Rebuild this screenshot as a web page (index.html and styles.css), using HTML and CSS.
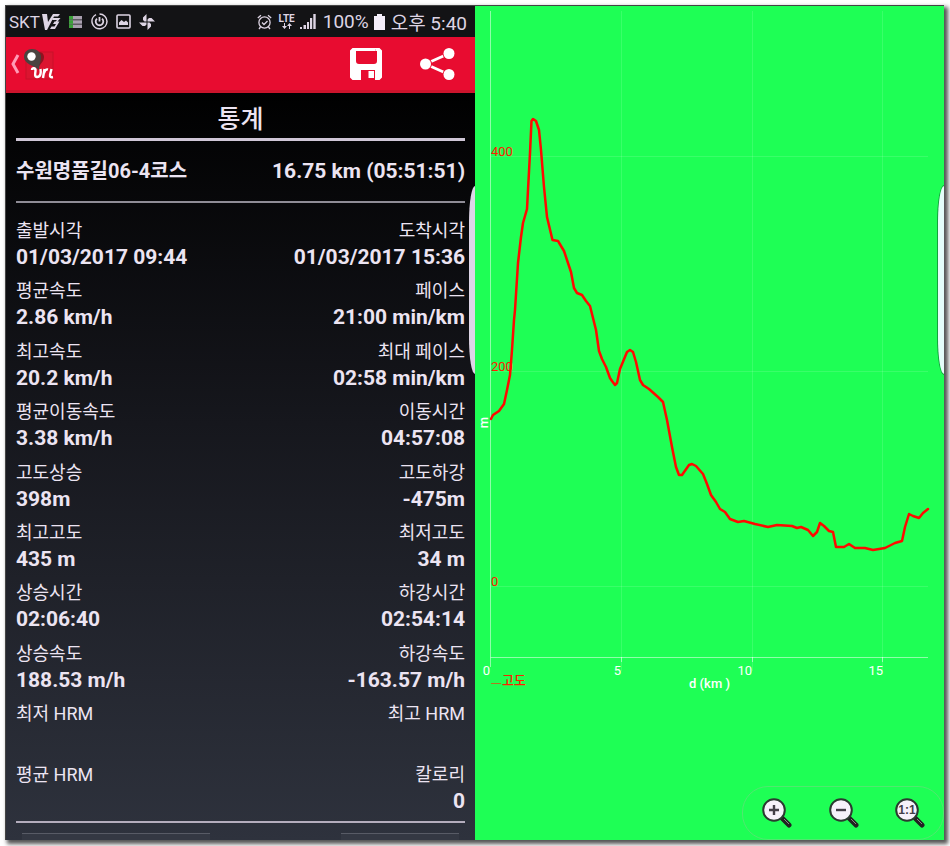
FILE: index.html
```
<!DOCTYPE html>
<html lang="ko">
<head>
  <meta charset="UTF-8" />
  <meta name="viewport" content="width=device-width, initial-scale=1.0"/>
  <title>통계</title>
  <link rel="stylesheet" href="styles.css">
</head>
<body>

  <main class="frame">
    <section class="panel stats">

      <!-- Status bar -->
      <div class="status">
        <span>SKT</span>
        <svg class="vs" width="19" height="16" viewBox="0 0 19 16" fill="#ded5e4">
          <path d="M0 0h5l1 8 5-8h7l-2 2.500h-4L5 16H3z"/>
          <path d="M11 4h7.500l-3 3.500h2L13 15H8l1.500-2.500h3L14 10h-3l1.500-2.500h1L15 6h-5z"/>
        </svg>
        <svg class="list" width="14" height="12" viewBox="0 0 14 12">
          <path fill="#aaa0b0" d="M0 0h13v3.500H0zM0 4.200h13v3.500H0zM0 8.400h13V12H0z"/>
          <path fill="#3aa038" d="M0 0h4v3.500H0zM0 4.200h4v3.500H0zM0 8.400h4V12H0z"/>
        </svg>
        <svg class="swirl" width="17" height="17" viewBox="0 0 17 17" fill="none" stroke="#ded5e4" stroke-width="1.500">
          <path d="M5 1.600A7.500 7.500 0 1 0 16 8.500 7.500 7.500 0 0 0 8.500 1"/>
          <path d="M8.500 4v4.500M6 5.600a3.800 3.800 0 1 0 5 0" stroke-width="1.800"/>
        </svg>
        <svg class="photo" width="15" height="15" viewBox="0 0 15 15">
          <rect x="1" y="1" width="13" height="13" rx="1" fill="none" stroke="#ded5e4" stroke-width="1.600"/>
          <path fill="#ded5e4" d="M3 11V8.500L5.500 6 8 8l2-1.500 2 2V11z"/>
        </svg>
        <svg width="16" height="16" viewBox="0 0 16 16" fill="#ded5e4">
          <path d="M7.500 7.500V0L4 3.500v2.500l1.500 1.500zM8.500 7.500H16L12.500 4H10L8.500 5.500zM8.500 8.500V16l3.500-3.500V10l-1.500-1.500zM7.500 8.500H0L3.500 12H6l1.500-1.500z"/>
        </svg>

        <svg class="alarm" width="15" height="16" viewBox="0 0 15 16" fill="none" stroke="#ded5e4" stroke-width="1.300">
          <circle cx="7.500" cy="8.500" r="5.600"/>
          <path d="M.8 4 4 1.200M14.200 4 11 1.200M5 8.500l2 2 3.500-3.500M3.500 13 2 15M11.500 13l1.500 2"/>
        </svg>
        <div class="lte">
          <span>LTE</span>
          <svg width="10" height="6" viewBox="0 0 10 6" fill="#ded5e4">
            <path d="M2 0h1v3h2L2.500 6 0 3h2zM7 6h1V3h2L7.500 0 5 3h2z"/>
          </svg>
        </div>
        <svg class="signal" width="16" height="15" viewBox="0 0 16 15" fill="#ded5e4">
          <path d="M0 13h2v2H0zM3.500 11H6v4H3.500zM7 8h2v7H7zM10 4h2.200v11H10zM13.300 0h2.400v15h-2.400z"/>
        </svg>
        <span>100%</span>
        <svg class="battery" width="11" height="16" viewBox="0 0 11 16" fill="#f4eefa">
          <path d="M3 0h5v2h3v14H0V2h3z"/>
        </svg>
        <span>오후 5:40</span>
      </div>

      <!-- Action bar -->
      <header class="appbar">
        <button class="back" aria-label="뒤로">
          <svg width="46" height="34" viewBox="0 0 46 34">
            <path d="M9 8 4 17l5 9" fill="none" stroke="#ff9cb6" stroke-width="3"/>
            <rect x="17" y="5" width="27" height="27" fill="#dc1430" stroke="#c81028" stroke-width="1"/>
            <path fill="#8c1420" d="M26 6c7-3 11 2 8 8l-6 8z"/>
            <path fill="#4a4340" d="M23 2c5 0 9 3.500 9 8 0 5-2 7-2 13-4-4-15-6-15-13 0-5 3.500-8 8-8z"/>
            <circle cx="22.500" cy="9.500" r="4.200" fill="#fff"/>
            <path d="M23 23c0-3 4-2 3.500 1s-1 6 1.500 6c4 0 4-5 3.500-8M35.500 22 34 31M35 26c1-3 2-4 4-3.500M42.500 22l-1.500 6c-.3 2 1 2.500 3 2" fill="none" stroke="#fff" stroke-width="2.400"/>
          </svg>
        </button>
        <button class="action" aria-label="저장">
          <svg width="32" height="32" viewBox="0 0 32 32">
            <path fill="#fff" fill-rule="evenodd" d="M2.500 0h27L32 2.500v27L29.500 32h-27L0 29.500v-27zM6 3v10q0 3 3 3h15q3 0 3-3V3h-1.500v-2H7v2zM11 22v10h14V22z"/>
            <path fill="#fff" d="M6.500.5h19V3h-19zM18.500 23h5.500v7h-5.500z"/>
          </svg>
        </button>
        <button class="action" aria-label="공유">
          <svg width="36" height="32" viewBox="0 0 36 32" fill="#fff">
            <path d="M5.500 16 29 5.500M5.500 16 29 26.500" stroke="#fff" stroke-width="2.800"/>
            <circle cx="5.500" cy="16" r="6.500" fill="#e80c30"/>
            <circle cx="29" cy="5.500" r="6.500" fill="#e80c30"/>
            <circle cx="29" cy="26.500" r="6.500" fill="#e80c30"/>
            <circle cx="5.500" cy="16" r="5.500"/>
            <circle cx="29" cy="5.500" r="5.500"/>
            <circle cx="29" cy="26.500" r="5.500"/>
          </svg>
        </button>
      </header>

      <div class="content">
        <h1 class="title">통계</h1>
        <div class="course">
          <span>수원명품길06-4코스</span>
          <span>16.75 km (05:51:51)</span>
        </div>

        <dl class="grid">
          <div class="cell"><dt>출발시각</dt><dd>01/03/2017 09:44</dd></div>
          <div class="cell"><dt>도착시각</dt><dd>01/03/2017 15:36</dd></div>
          <div class="cell"><dt>평균속도</dt><dd>2.86 km/h</dd></div>
          <div class="cell"><dt>페이스</dt><dd>21:00 min/km</dd></div>
          <div class="cell"><dt>최고속도</dt><dd>20.2 km/h</dd></div>
          <div class="cell"><dt>최대 페이스</dt><dd>02:58 min/km</dd></div>
          <div class="cell"><dt>평균이동속도</dt><dd>3.38 km/h</dd></div>
          <div class="cell"><dt>이동시간</dt><dd>04:57:08</dd></div>
          <div class="cell"><dt>고도상승</dt><dd>398m</dd></div>
          <div class="cell"><dt>고도하강</dt><dd>-475m</dd></div>
          <div class="cell"><dt>최고고도</dt><dd>435 m</dd></div>
          <div class="cell"><dt>최저고도</dt><dd>34 m</dd></div>
          <div class="cell"><dt>상승시간</dt><dd>02:06:40</dd></div>
          <div class="cell"><dt>하강시간</dt><dd>02:54:14</dd></div>
          <div class="cell"><dt>상승속도</dt><dd>188.53 m/h</dd></div>
          <div class="cell"><dt>하강속도</dt><dd>-163.57 m/h</dd></div>
          <div class="cell"><dt>최저 HRM</dt><dd></dd></div>
          <div class="cell"><dt>최고 HRM</dt><dd></dd></div>
          <div class="cell"><dt>평균 HRM</dt><dd></dd></div>
          <div class="cell"><dt>칼로리</dt><dd>0</dd></div>
        </dl>

        <div class="tabs">
          <div class="tab wide"></div>
          <div class="tab"></div>
        </div>
      </div>
    </section>

    <!-- Altitude chart -->
    <section class="panel graph">
      <svg class="chart" viewBox="0 0 469 780" role="img" aria-label="고도">
        <g class="gridlines">
          <path d="M146.500 5v660M277.500 5v660M407.500 5v660"/>
          <path d="M16 150.500h437M16 365.500h437M16 580.500h437"/>
        </g>
        <path class="axis" d="M15.500 5v656M15.500 651.500H453M146.500 651v5M277.500 651v5M407.500 651v5"/>
        <g class="ylabels">
          <text x="16" y="150">400</text>
          <text x="16" y="365">200</text>
          <text x="16" y="580">0</text>
          <path d="M16 677.500h10"/>
          <text class="legend" x="27" y="679">고도</text>
        </g>
        <polyline class="altitude" points="
          16,413 18,409 24,405 29,398 32,384 35,369 37,344 39,314 40,304 43,257 46,231 48,217 52,203 53,184 55,147
          56.500,115 58,113 61,115 64,124 66,144 69,181 72,211 77.500,234 83,235 89,245 96,266 99,282 102,287 107,289 111,295 115,300
          121,324 124,345 127,353 131,361 135,372 137,375 140,379 142,377 145,363 152,346 155,344 158,346 161,356
          165,374 168,379 174,383 183,391 188,396 192,414 197,441 201,461 204,469 207,469 214,459 217,458 221,460
          228,468 232,478 236,489 241,496 245,503 250,506 255,513 263,516 269,515 280,518 293,521 302,519 317,520
          322,522 326,521 333,524 338,530 342,526 345,517 349,520 354,525 358,526 361,541 369,541 374,538 380,542
          390,542 398,544 410,542 420,537 427,535 430,521 434,508 438,510 444,512 448,507 453,503"/>
        <g class="xlabels">
          <text x="15" y="669">0</text>
          <text x="146" y="669">5</text>
          <text x="277" y="669">10</text>
          <text x="408" y="669">15</text>
          <text class="unit" x="255" y="682">d (km )</text>
          <text class="unit" x="0" y="0" transform="translate(13 411) rotate(-90)">m</text>
        </g>
      </svg>

      <div class="zoom">
        <button aria-label="확대">
          <svg width="30" height="32" viewBox="0 0 30 32">
            <path d="m20 21 7 7" stroke="#222" stroke-width="5" stroke-linecap="round"/>
            <path d="m22 22 5 5" stroke="#888" stroke-width="1"/>
            <circle cx="12" cy="13" r="10.800" fill="#f6f1fa" stroke="#2b3a30" stroke-width="2"/>
            <path d="M12 8v10M7 13h10" stroke="#443f48" stroke-width="2.400"/>
          </svg>
        </button>
        <button aria-label="축소">
          <svg width="30" height="32" viewBox="0 0 30 32">
            <path d="m20 21 7 7" stroke="#222" stroke-width="5" stroke-linecap="round"/>
            <path d="m22 22 5 5" stroke="#888" stroke-width="1"/>
            <circle cx="12" cy="13" r="10.800" fill="#f6f1fa" stroke="#2b3a30" stroke-width="2"/>
            <path d="M7 13h10" stroke="#443f48" stroke-width="2.400"/>
          </svg>
        </button>
        <button aria-label="원래 크기">
          <svg width="30" height="32" viewBox="0 0 30 32">
            <path d="m20 21 7 7" stroke="#222" stroke-width="5" stroke-linecap="round"/>
            <path d="m22 22 5 5" stroke="#888" stroke-width="1"/>
            <circle cx="12" cy="13" r="10.800" fill="#f6f1fa" stroke="#2b3a30" stroke-width="2"/>
            <text class="ratio" x="12" y="17">1:1</text>
          </svg>
        </button>
      </div>
    </section>
  </main>

</body>
</html>
```

FILE: styles.css
```
* {
  box-sizing: border-box;
  margin: 0;
  padding: 0;
}

body {
  padding: 5px 6px 6px 5px;
  background: #fff;
  font-family: Roboto, "Noto Sans CJK KR", sans-serif;
  color: #ece4f2;
}

.frame {
  display: grid;
  grid-template-columns: 1fr 1fr;
  min-height: calc(100vh - 11px);
  border-top: 1px solid #444;
  border-left: 1px solid #444;
  box-shadow: 3px 3px 4px 1px #555;
}

.panel {
  position: relative;
  display: flex;
  flex-direction: column;
  overflow: hidden;
}

/* edge panel handle */
.panel::after {
  content: "";
  position: absolute;
  top: 180px;
  right: 0;
  width: 6px;
  height: 188px;
  background: #ddd5e6;
  border-radius: 6px 0 0 6px / 36px 0 0 36px;
}

.stats {
  background: linear-gradient(#000 10%, #16171d 50%, #2e323d);
}

.graph {
  background: #1eff55;
}

.graph::after {
  background: #e4fdfa;
  box-shadow: 0 0 0 1px #14a03c;
}

.status {
  display: flex;
  align-items: center;
  height: 31px;
  padding: 0 8px 0 3px;
  background: #131315;
  color: #ded5e4;
  font-size: 19px;
  white-space: nowrap;
}

.status > span:first-child {
  font-size: 17px;
}

.vs {
  margin: 0 8px 0 2px;
}

.list, .swirl, .photo {
  margin-right: 8px;
}

.alarm {
  margin: 0 7px 0 auto;
}

.lte {
  display: flex;
  flex-direction: column;
  align-items: center;
  font-size: 10px;
  font-weight: 700;
  line-height: 9px;
}

.signal {
  margin: 0 7px 0 5px;
}

.battery {
  margin: 0 6px 0 5px;
}

.appbar {
  display: flex;
  align-items: center;
  height: 56px;
  padding: 0 19px 0 3px;
  background: #e80c30;
  border-bottom: 3px solid #cc142c;
}

button {
  display: flex;
  background: none;
  border: none;
  cursor: pointer;
}

.back {
  margin-right: auto;
}

.action + .action {
  margin-left: 38px;
}

.content {
  flex: 1;
  display: flex;
  flex-direction: column;
  padding: 0 10px;
}

.title {
  padding-top: 8px;
  border-bottom: 3px solid #cfc6d6;
  font-size: 25px;
  font-weight: 500;
  line-height: 37px;
  text-align: center;
}

.course {
  display: flex;
  justify-content: space-between;
  border-bottom: 2px solid #8f8c96;
  font-size: 21px;
  font-weight: 700;
  line-height: 60px;
}

.course span:first-child {
  font-size: 20px;
}

.grid {
  flex: 1;
  display: grid;
  grid-template-columns: 1fr 1fr;
  grid-auto-rows: 1fr;
  padding-top: 14px;
  border-bottom: 2px solid #b4adbd;
}

.cell {
  line-height: 27px;
}

.cell:nth-child(even) {
  text-align: right;
}

.cell dt {
  font-size: 18px;
}

.cell dd {
  font-size: 21px;
  font-weight: 700;
}

.tabs {
  display: flex;
  justify-content: space-between;
  padding: 10px 6px 0;
}

.tab {
  width: 27%;
  height: 7px;
  background: #343843;
  border-top: 1px solid #585b66;
}

.tab.wide {
  width: 43%;
}

.chart {
  display: block;
  width: 100%;
  font-size: 13px;
}

.gridlines, .axis {
  fill: none;
  stroke: #fff;
  stroke-opacity: 0.12;
}

.axis {
  stroke-opacity: 0.5;
}

.altitude {
  fill: none;
  stroke: #ff0a00;
  stroke-width: 2.5;
  stroke-linejoin: round;
  stroke-linecap: round;
}

.ylabels {
  fill: #ff2000;
  stroke: none;
}

.ylabels path {
  stroke: #b07820;
}

.legend {
  font-weight: 500;
}

.xlabels {
  fill: #fff;
  text-anchor: end;
}

.unit {
  font-weight: 500;
}

.zoom {
  align-self: flex-end;
  display: flex;
  justify-content: space-between;
  width: 43%;
  margin-top: auto;
  padding: 10px 18px 10px 19px;
  border: 1px solid #50e870;
  border-radius: 26px;
}

.ratio {
  font-size: 12px;
  font-weight: 700;
  text-anchor: middle;
  fill: #443f48;
}
```
